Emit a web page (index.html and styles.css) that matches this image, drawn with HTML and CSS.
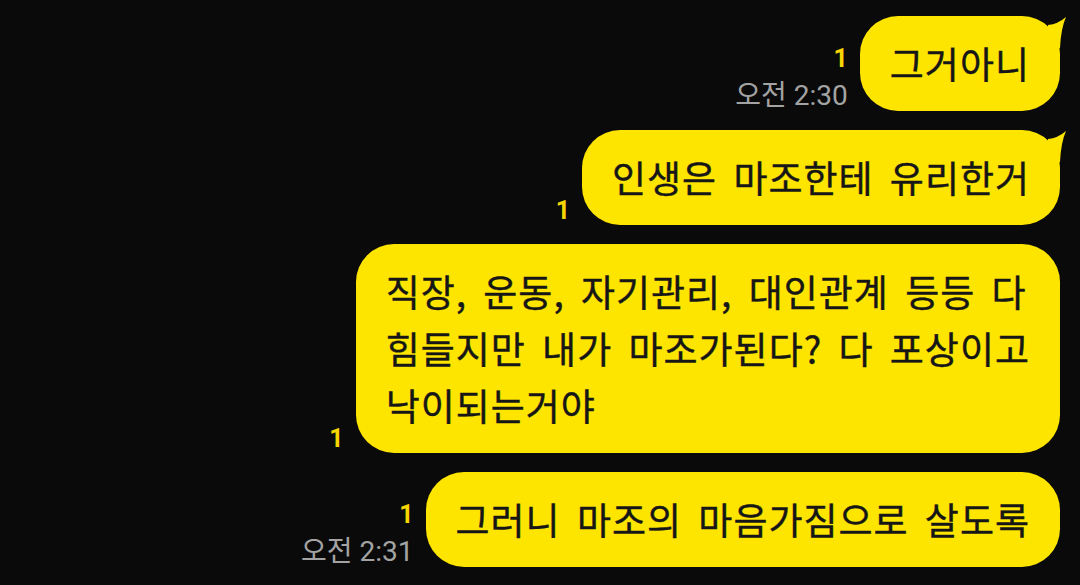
FILE: index.html
```html
<!DOCTYPE html>
<html>
<head>
    <meta charset="utf-8">
    <title>채팅</title>
    <link rel="stylesheet" href="styles.css">
</head>
<body>
    <div class="chat">
        <div class="row">
            <div class="meta">
                <span class="unread">1</span>
                <span class="time">오전 2:30</span>
            </div>
            <div class="bubble first">
                그거아니
                <svg class="tail" viewBox="0 0 30 40" width="30" height="40"><path d="M10 9 Q20 8 28 1 Q23 12 22 32 L8 32 Z" /></svg>
            </div>
        </div>
        <div class="row">
            <div class="meta">
                <span class="unread">1</span>
            </div>
            <div class="bubble first">
                인생은 마조한테 유리한거
                <svg class="tail" viewBox="0 0 30 40" width="30" height="40"><path d="M10 9 Q20 8 28 1 Q23 12 22 32 L8 32 Z" /></svg>
            </div>
        </div>
        <div class="row">
            <div class="meta">
                <span class="unread">1</span>
            </div>
            <div class="bubble">직장, 운동, 자기관리, 대인관계 등등 다<br>힘들지만 내가 마조가된다? 다 포상이고<br>낙이되는거야</div>
        </div>
        <div class="row">
            <div class="meta">
                <span class="unread">1</span>
                <span class="time">오전 2:31</span>
            </div>
            <div class="bubble">그러니 마조의 마음가짐으로 살도록</div>
        </div>
    </div>
</body>
</html>
```

FILE: styles.css
```css
html,
body {
    overflow: hidden;
}

body {
    margin: 0;
    background: #0a0a0a;
    font-family: "Noto Sans CJK KR", "Noto Sans", sans-serif;
}

.chat {
    display: flex;
    flex-direction: column;
    gap: 19px;
    padding: 16px 20px;
}

.row {
    display: flex;
    justify-content: flex-end;
    align-items: flex-end;
    gap: 12px;
}

.meta {
    display: flex;
    flex-direction: column;
    align-items: flex-end;
    gap: 6px;
    font-family: Roboto, "Noto Sans CJK KR", sans-serif;
}

.unread {
    color: #f7d600;
    font-weight: 700;
    font-size: 25px;
    line-height: 29px;
}

.time {
    color: #a3a3a3;
    font-size: 28px;
    line-height: 34px;
    margin-bottom: -2px;
    white-space: nowrap;
}

.bubble {
    position: relative;
    background: #fee500;
    color: #161616;
    font-size: 37px;
    line-height: 57px;
    letter-spacing: 1px;
    word-spacing: 7px;
    padding: 19px 30px;
    border-radius: 38px;
    white-space: nowrap;
    -webkit-text-stroke: 0.4px #161616;
}

.bubble .tail {
    position: absolute;
    top: 0;
    right: -8px;
    fill: #fee500;
}
```
